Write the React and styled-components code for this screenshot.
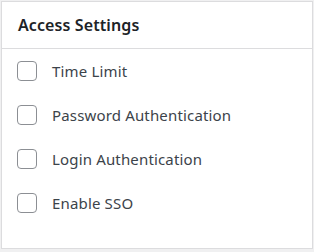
import React from "react";
import styled, { createGlobalStyle } from "styled-components";

const Global = createGlobalStyle`
  html, body { margin: 0; padding: 0; background: #f0f0f1; }
  body { font-family: "Noto Sans", "Open Sans", sans-serif; }
`;

const Card = styled.section`
  box-sizing: border-box;
  width: 312px;
  height: 248px;
  margin: 1px 0 0 1px;
  background: #fff;
  border: 1px solid #dcdcde;
`;

const Header = styled.h2`
  box-sizing: border-box;
  margin: 0;
  height: 47px;
  border-bottom: 1px solid #dcdcde;
  padding-left: 16px;
  display: flex;
  align-items: center;
  font-size: 16px;
  font-weight: 600;
  letter-spacing: 0.1px;
  color: #1d2327;
`;

const List = styled.div`
  display: flex;
  flex-direction: column;
  padding-left: 15px;
`;

const Row = styled.label`
  height: 44px;
  display: flex;
  align-items: center;
  gap: 15px;
  font-size: 15px;
  letter-spacing: 0.16px;
  color: #3c434a;
`;

const Box = styled.span`
  box-sizing: border-box;
  width: 20px;
  height: 20px;
  border: 1px solid #8c8f94;
  border-radius: 4px;
  background: #fff;
`;

const items = ["Time Limit", "Password Authentication", "Login Authentication", "Enable SSO"];

export default function App() {
  return (
    <>
      <Global />
      <Card>
        <Header>Access Settings</Header>
        <List>
          {items.map((t) => (
            <Row key={t}>
              <Box />
              {t}
            </Row>
          ))}
        </List>
      </Card>
    </>
  );
}
